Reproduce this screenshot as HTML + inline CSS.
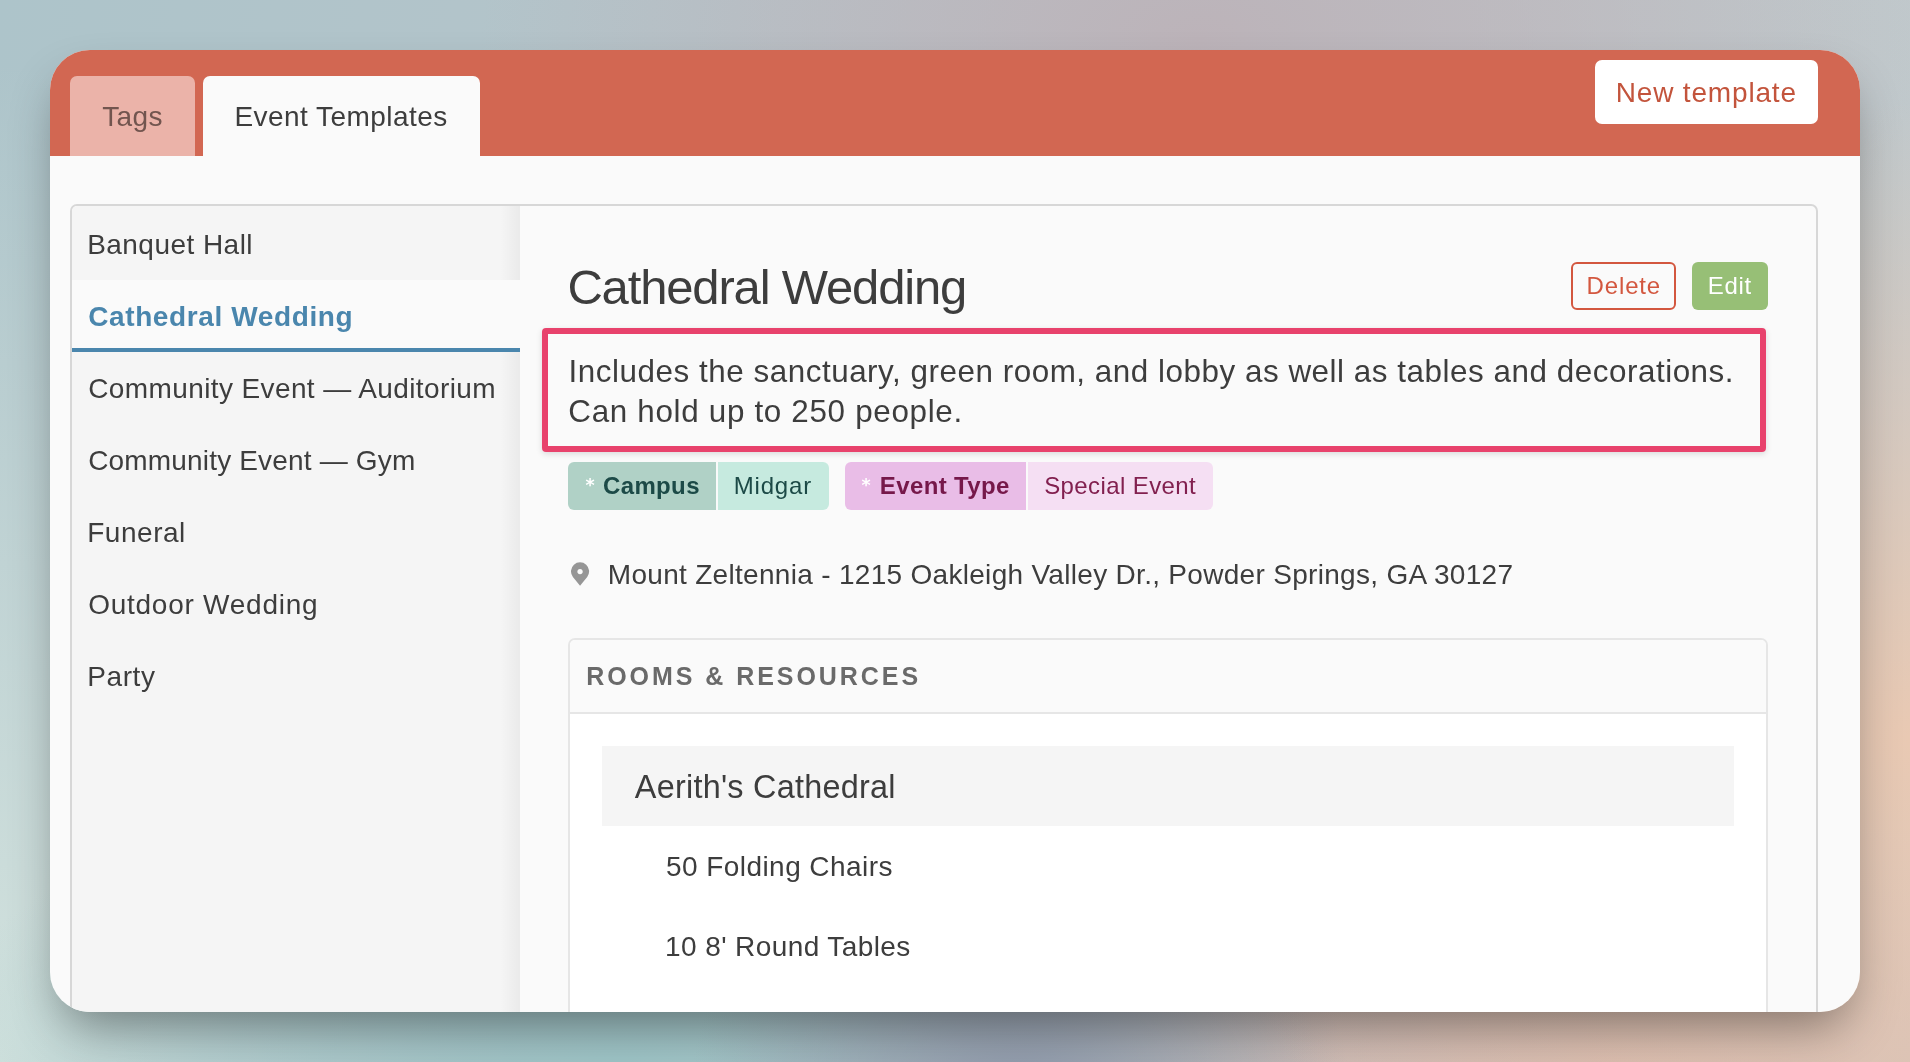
<!DOCTYPE html>
<html lang="en">
<head>
<meta charset="utf-8">
<title>Event Templates</title>
<style>
*{box-sizing:border-box;margin:0;padding:0}
html,body{width:1910px;height:1062px;overflow:hidden}
body{position:relative;font-family:"Liberation Sans",sans-serif;color:#3d3d3d;
background:
radial-gradient(ellipse 720px 640px at 1910px 740px,rgba(233,201,179,1),rgba(233,201,179,0) 100%),
radial-gradient(ellipse 720px 420px at 1200px 40px,rgba(188,179,185,1),rgba(188,179,185,0) 100%),
radial-gradient(ellipse 330px 260px at 1020px 1090px,rgba(144,154,172,1),rgba(144,154,172,0) 100%),
radial-gradient(ellipse 700px 300px at 620px 1062px,rgba(158,197,199,1),rgba(158,197,199,0) 100%),
radial-gradient(ellipse 520px 1000px at 0px 1062px,rgba(210,226,222,1),rgba(210,226,222,0) 100%),
radial-gradient(ellipse 1000px 420px at 1620px 1062px,rgba(214,185,174,1),rgba(214,185,174,0) 100%),
linear-gradient(100deg,#adc4ca 0%,#b5c4ca 35%,#bec4c8 70%,#c1cacd 100%);
}
.t{position:absolute;line-height:1;white-space:nowrap}
.a{position:absolute}
#shadow{left:50px;top:50px;width:1810px;height:962px;border-radius:40px;box-shadow:0 25px 50px -12px rgba(0,0,0,.42)}
#card{left:50px;top:50px;width:1810px;height:962px;border-radius:40px;background:#fafafa;overflow:hidden}
#pg{left:-50px;top:-50px;width:1910px;height:1062px;will-change:transform}
#hdr{left:50px;top:50px;width:1810px;height:106px;background:#d26752}
#t1{left:70px;top:76px;width:125px;height:80px;border-radius:7px 7px 0 0;background:#ebb3a9}
#t2{left:203px;top:76px;width:277px;height:80px;border-radius:7px 7px 0 0;background:#fafafa}
#newbtn{left:1595px;top:60px;width:223px;height:64px;border-radius:7px;background:#fff}
#panel{left:70px;top:204px;width:1748px;height:900px;border:2px solid #d7d7d7;border-radius:7px;background:#fafafa}
#side{left:72px;top:206px;width:448px;height:900px;background:#f5f5f5;border-radius:5px 0 0 0}
#sidesh{left:500px;top:206px;width:20px;height:900px;background:linear-gradient(90deg,rgba(0,0,0,0),rgba(0,0,0,.042))}
#sel{left:72px;top:280px;width:448px;height:72px;background:#fafafa;border-bottom:4px solid #4a86ad}
#del{left:1571px;top:262px;width:105px;height:48px;border:2px solid #d3573f;border-radius:6px}
#edit{left:1692px;top:262px;width:76px;height:48px;border-radius:6px;background:#97bf76}
#hl{left:542px;top:328px;width:1224px;height:124px;border:6px solid #e8426c;border-radius:4px;box-shadow:0 2px 6px rgba(0,0,0,.13)}
.tag{top:462px;height:48px}
#rr{left:568px;top:638px;width:1200px;height:500px;border:2px solid #e6e6e6;border-radius:7px;background:#fff}
#rrh{left:570px;top:640px;width:1196px;height:74px;background:#fafafa;border-bottom:2px solid #e6e6e6;border-radius:5px 5px 0 0}
#room{left:602px;top:746px;width:1132px;height:80px;background:#f5f5f5}
</style>
</head>
<body>
<div class="a" id="shadow"></div>
<div class="a" id="card"><div class="a" id="pg">
<div class="a" id="hdr"></div>
<div class="a" id="t1"></div>
<div class="a" id="t2"></div>
<div class="a" id="newbtn"></div>
<div class="t" id="tags" style="left:102.20px;top:102.70px;font-size:28px;letter-spacing:0.400px;color:#72554f">Tags</div><div class="t" id="evt" style="left:234.40px;top:102.70px;font-size:28px;letter-spacing:0.457px;color:#3d3d3d">Event Templates</div><div class="t" id="new" style="left:1615.80px;top:79.10px;font-size:28px;letter-spacing:0.818px;color:#c3543c">New template</div>
<div class="a" id="panel"></div>
<div class="a" id="side"></div>
<div class="a" id="sidesh"></div>
<div class="a" id="sel"></div>
<div class="t" id="i1" style="left:87.20px;top:230.50px;font-size:28px;letter-spacing:0.455px;color:#3d3d3d">Banquet Hall</div><div class="t" id="i2" style="left:88.20px;top:302.70px;font-size:28px;letter-spacing:0.613px;color:#4a86ad;font-weight:bold">Cathedral Wedding</div><div class="t" id="i3" style="left:88.20px;top:374.90px;font-size:28px;letter-spacing:0.393px;color:#3d3d3d">Community Event — Auditorium</div><div class="t" id="i4" style="left:88.20px;top:447.10px;font-size:28px;letter-spacing:0.170px;color:#3d3d3d">Community Event — Gym</div><div class="t" id="i5" style="left:87.20px;top:518.90px;font-size:28px;letter-spacing:0.533px;color:#3d3d3d">Funeral</div><div class="t" id="i6" style="left:88.20px;top:591.10px;font-size:28px;letter-spacing:0.743px;color:#3d3d3d">Outdoor Wedding</div><div class="t" id="i7" style="left:87.20px;top:662.90px;font-size:28px;letter-spacing:0.600px;color:#3d3d3d">Party</div>
<div class="t" id="title" style="left:567.40px;top:263.32px;font-size:49px;letter-spacing:-1.163px;color:#3d3d3d">Cathedral Wedding</div>
<div class="a" id="del"></div>
<div class="a" id="edit"></div>
<div class="t" id="del_t" style="left:1586.60px;top:273.58px;font-size:24px;letter-spacing:0.840px;color:#d3573f">Delete</div><div class="t" id="edit_t" style="left:1707.80px;top:273.58px;font-size:24px;letter-spacing:0.667px;color:#ffffff">Edit</div>
<div class="a" id="hl"></div>
<div class="t" id="d1" style="left:568.60px;top:355.92px;font-size:31.4px;letter-spacing:0.529px;color:#3d3d3d">Includes the sanctuary, green room, and lobby as well as tables and decorations.</div><div class="t" id="d2" style="left:568.30px;top:395.82px;font-size:31.4px;letter-spacing:0.676px;color:#3d3d3d">Can hold up to 250 people.</div>
<div class="a tag" style="left:568px;width:148px;background:#b0d1c6;border-radius:6px 0 0 6px"></div>
<div class="a tag" style="left:718px;width:111px;background:#c6eadf;border-radius:0 6px 6px 0"></div>
<div class="a tag" style="left:845px;width:181px;background:#e9bde7;border-radius:6px 0 0 6px"></div>
<div class="a tag" style="left:1028px;width:185px;background:#f5dff3;border-radius:0 6px 6px 0"></div>
<div class="t" id="ast1" style="left:585.50px;top:476.69px;font-size:17.5px;letter-spacing:0.000px;color:#ffffff;font-weight:bold;font-family:'DejaVu Sans',sans-serif">*</div><div class="t" id="campus" style="left:603.00px;top:474.08px;font-size:24px;letter-spacing:0.360px;color:#1c4a47;font-weight:bold">Campus</div><div class="t" id="midgar" style="left:733.80px;top:474.08px;font-size:24px;letter-spacing:0.800px;color:#1c4a47">Midgar</div><div class="t" id="ast2" style="left:861.60px;top:476.69px;font-size:17.5px;letter-spacing:0.000px;color:#ffffff;font-weight:bold;font-family:'DejaVu Sans',sans-serif">*</div><div class="t" id="etype" style="left:879.80px;top:474.08px;font-size:24px;letter-spacing:0.378px;color:#76184a;font-weight:bold">Event Type</div><div class="t" id="special" style="left:1044.20px;top:474.08px;font-size:24px;letter-spacing:0.400px;color:#82204f">Special Event</div>
<svg class="a" style="left:570.9px;top:562px" width="19" height="24" viewBox="0 0 19 24"><path fill-rule="evenodd" d="M9.05 23.8 L1.9 14.9 A9.05 9.05 0 1 1 16.2 14.9 Z M9.05 7.0 a2.65 2.65 0 1 0 0.001 0 Z" fill="#969696"/></svg>
<div class="t" id="loc" style="left:607.80px;top:561.40px;font-size:28px;letter-spacing:0.301px;color:#3d3d3d">Mount Zeltennia - 1215 Oakleigh Valley Dr., Powder Springs, GA 30127</div>
<div class="a" id="rr"></div>
<div class="a" id="rrh"></div>
<div class="t" id="rr_t" style="left:586.20px;top:663.94px;font-size:25px;letter-spacing:2.950px;color:#6a6a6a;font-weight:bold">ROOMS &amp; RESOURCES</div>
<div class="a" id="room"></div>
<div class="t" id="room_t" style="left:634.80px;top:771.07px;font-size:32.4px;letter-spacing:0.247px;color:#3d3d3d">Aerith's Cathedral</div><div class="t" id="r1" style="left:666.00px;top:853.20px;font-size:28px;letter-spacing:0.438px;color:#3d3d3d">50 Folding Chairs</div><div class="t" id="r2" style="left:665.00px;top:933.00px;font-size:28px;letter-spacing:0.412px;color:#3d3d3d">10 8' Round Tables</div>
</div></div>
</body>
</html>
